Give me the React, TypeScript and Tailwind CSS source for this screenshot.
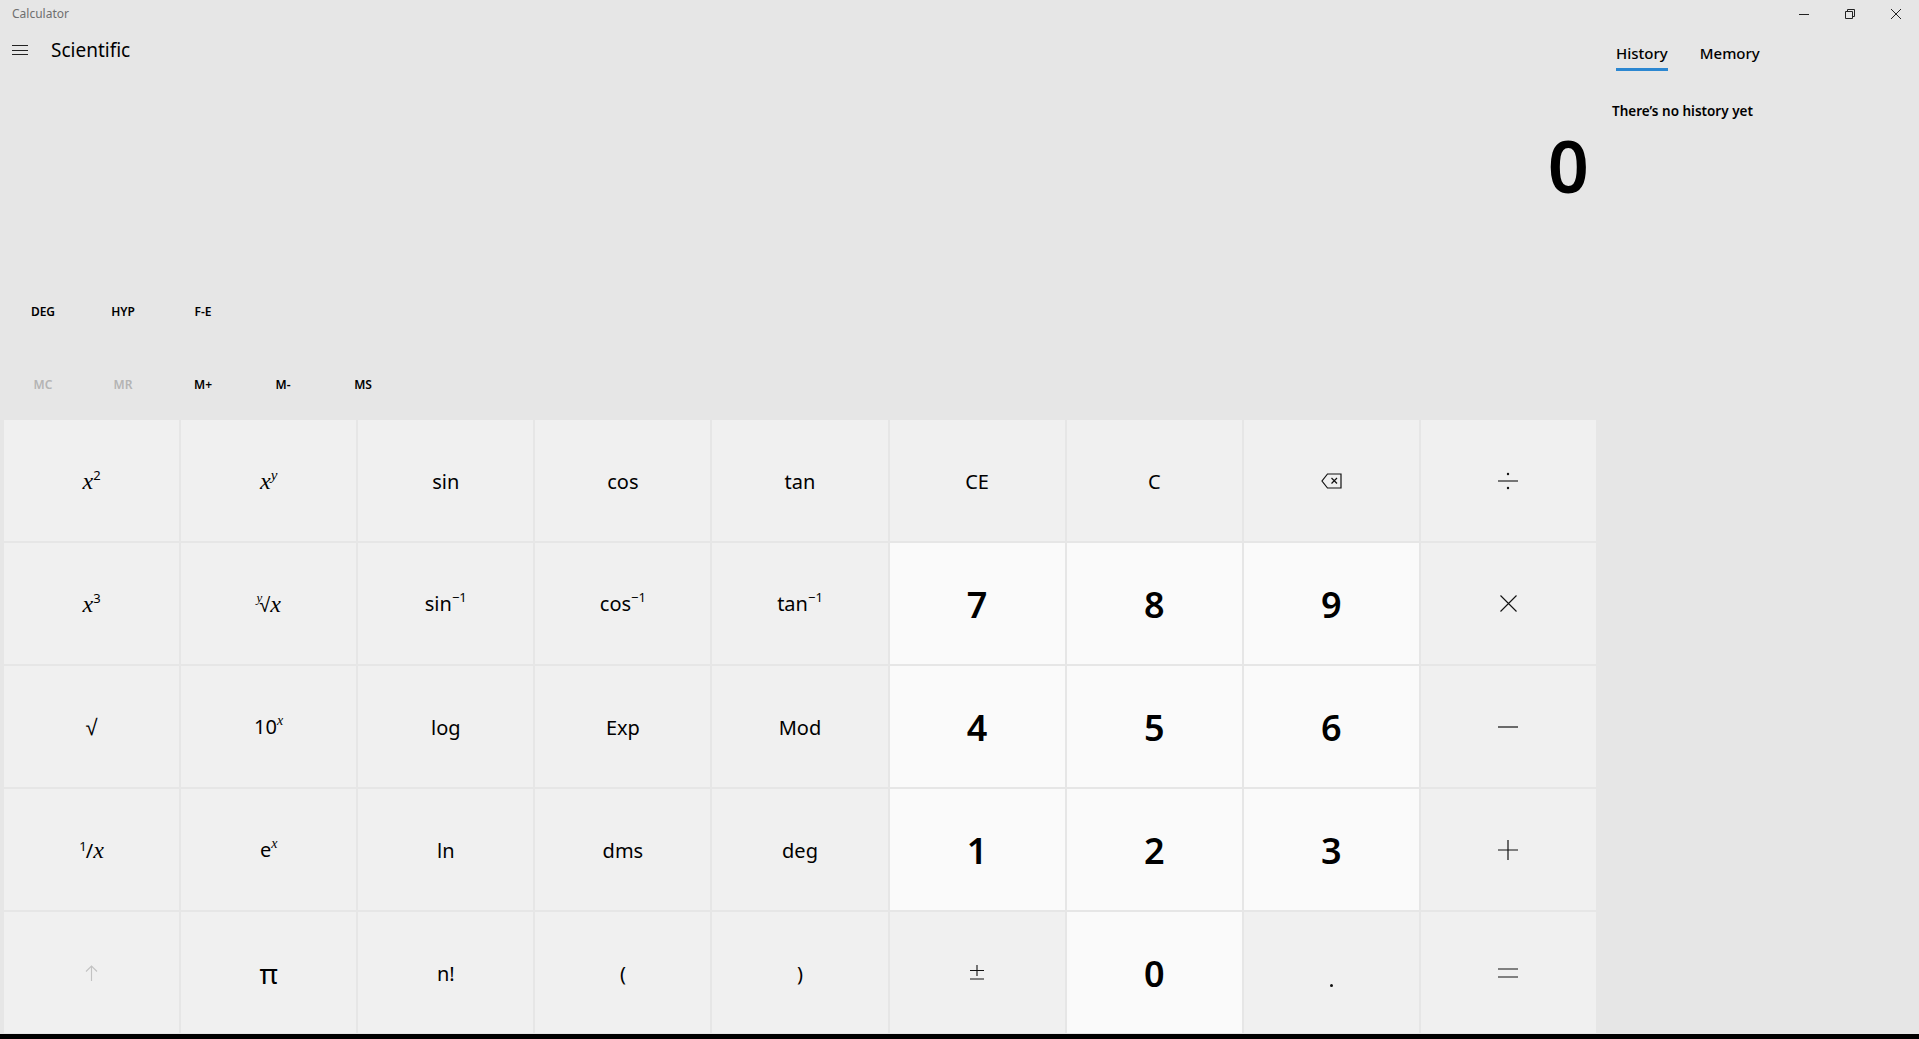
import React from "react";

const serif = "font-['Liberation_Serif',serif] italic";

function X({ size = "text-[24px]" }: { size?: string }) {
  return <span className={`${serif} ${size}`}>x</span>;
}

function Sup({ children, className = "" }: { children: React.ReactNode; className?: string }) {
  return <span className={`relative -top-[9px] text-[13px] leading-none ${className}`}>{children}</span>;
}

function Inv({ fn }: { fn: string }) {
  return (
    <span className="text-[20px]">
      {fn}
      <Sup className="-top-[8px] text-[12px]">−1</Sup>
    </span>
  );
}

// thin operator glyphs, drawn like the MDL2 calculator font
function Divide() {
  return (
    <svg width="20" height="20" viewBox="0 0 20 20">
      <line x1="0" y1="10" x2="20" y2="10" stroke="#111" strokeWidth="1.1" />
      <circle cx="10" cy="3" r="1.2" fill="#111" />
      <circle cx="10" cy="17" r="1.2" fill="#111" />
    </svg>
  );
}

function Times() {
  return (
    <svg width="17" height="17" viewBox="0 0 17 17">
      <path d="M0.5 0.5 L16.5 16.5 M16.5 0.5 L0.5 16.5" stroke="#111" strokeWidth="1.1" fill="none" />
    </svg>
  );
}

function Minus() {
  return (
    <svg width="20" height="2" viewBox="0 0 20 2">
      <line x1="0" y1="1" x2="20" y2="1" stroke="#111" strokeWidth="1.2" />
    </svg>
  );
}

function Plus() {
  return (
    <svg width="20" height="20" viewBox="0 0 20 20">
      <path d="M0 10 H20 M10 0 V20" stroke="#111" strokeWidth="1.2" fill="none" />
    </svg>
  );
}

function Equals() {
  return (
    <svg width="20" height="10" viewBox="0 0 20 10">
      <path d="M0 1 H20 M0 9 H20" stroke="#111" strokeWidth="1.2" fill="none" />
    </svg>
  );
}

function PlusMinus() {
  return (
    <svg width="14" height="15" viewBox="0 0 14 15">
      <path d="M0 5.5 H14 M7 0 V11 M0 14 H14" stroke="#111" strokeWidth="1.1" fill="none" />
    </svg>
  );
}

function Backspace() {
  return (
    <svg width="21" height="16" viewBox="0 0 21 16">
      <path d="M6.5 1 H20 V15 H6.5 L1 8 Z" stroke="#111" strokeWidth="1.2" fill="none" strokeLinejoin="miter" />
      <path d="M10.5 5 L16 10.5 M16 5 L10.5 10.5" stroke="#111" strokeWidth="1.2" fill="none" />
    </svg>
  );
}

function ShiftArrow() {
  return (
    <svg width="13" height="16" viewBox="0 0 13 16">
      <path d="M6.5 1 V16 M1 6.5 L6.5 1 L12 6.5" stroke="#c2c2c2" strokeWidth="1.1" fill="none" />
    </svg>
  );
}

type Key = { label: React.ReactNode; digit?: boolean };

const fn = (s: string) => <span className="relative top-[1px] text-[20px]">{s}</span>;
const digit = (s: string): Key => ({
  label: <span className="relative top-[1px] text-[36px] font-semibold">{s}</span>,
  digit: true,
});

const keys: Key[] = [
  { label: <span><X /><Sup>2</Sup></span> },
  { label: <span><X /><Sup className={`${serif} text-[15px]`}>y</Sup></span> },
  { label: fn("sin") },
  { label: fn("cos") },
  { label: fn("tan") },
  { label: fn("CE") },
  { label: fn("C") },
  { label: <Backspace /> },
  { label: <Divide /> },

  { label: <span><X /><Sup>3</Sup></span> },
  {
    label: (
      <span className="flex items-baseline">
        <span className={`${serif} relative -top-[10px] -mr-[3px] text-[13px] leading-none`}>y</span>
        <span className="text-[20px]">√</span>
        <X />
      </span>
    ),
  },
  { label: <Inv fn="sin" /> },
  { label: <Inv fn="cos" /> },
  { label: <Inv fn="tan" /> },
  digit("7"),
  digit("8"),
  digit("9"),
  { label: <Times /> },

  { label: <span className="text-[22px]">√</span> },
  { label: <span className="text-[20px]">10<Sup className={`${serif} text-[14px]`}>x</Sup></span> },
  { label: fn("log") },
  { label: fn("Exp") },
  { label: fn("Mod") },
  digit("4"),
  digit("5"),
  digit("6"),
  { label: <Minus /> },

  {
    label: (
      <span className="flex items-baseline">
        <span className="relative -top-[7px] text-[13px] leading-none">1</span>
        <span className="-ml-[1px] text-[20px]">/</span>
        <X />
      </span>
    ),
  },
  { label: <span className="text-[20px]">e<Sup className={`${serif} text-[14px]`}>x</Sup></span> },
  { label: fn("ln") },
  { label: fn("dms") },
  { label: fn("deg") },
  digit("1"),
  digit("2"),
  digit("3"),
  { label: <Plus /> },

  { label: <ShiftArrow /> },
  { label: <span className="text-[28px]">π</span> },
  { label: fn("n!") },
  { label: fn("(") },
  { label: fn(")") },
  { label: <PlusMinus /> },
  digit("0"),
  { label: <span className="mt-[26px] block h-[3px] w-[3px] rounded-full bg-[#111]" /> },
  { label: <Equals /> },
];

function WindowControls() {
  return (
    <div className="flex h-full">
      <button className="flex w-[46px] items-center justify-center">
        <svg width="10" height="10" viewBox="0 0 10 10">
          <line x1="0" y1="5.5" x2="10" y2="5.5" stroke="#222" strokeWidth="1" />
        </svg>
      </button>
      <button className="flex w-[46px] items-center justify-center">
        <svg width="10" height="10" viewBox="0 0 10 10">
          <path d="M0.5 2.5 H7.5 V9.5 H0.5 Z M2.5 2.5 V0.5 H9.5 V7.5 H7.5" stroke="#222" strokeWidth="1" fill="none" />
        </svg>
      </button>
      <button className="flex w-[46px] items-center justify-center">
        <svg width="10" height="10" viewBox="0 0 10 10">
          <path d="M0 0 L10 10 M10 0 L0 10" stroke="#222" strokeWidth="1" fill="none" />
        </svg>
      </button>
    </div>
  );
}

export default function App() {
  return (
    <div className="flex h-[1039px] w-[1919px] flex-col overflow-hidden bg-[#e6e6e6] font-['Noto_Sans',sans-serif] text-black">
      {/* title bar */}
      <div className="flex h-[28px] shrink-0 items-center justify-between">
        <span className="pl-[12px] text-[12px] text-[#6f6f6f]">Calculator</span>
        <WindowControls />
      </div>

      <div className="flex min-h-0 flex-1">
        {/* calculator */}
        <div className="flex w-[1597px] shrink-0 flex-col">
          <div className="flex h-[44px] items-center">
            <button className="ml-[12px] flex h-[16px] w-[16px] flex-col justify-center gap-[3.5px]">
              <span className="block h-[1px] w-[16px] bg-[#222]" />
              <span className="block h-[1px] w-[16px] bg-[#222]" />
              <span className="block h-[1px] w-[16px] bg-[#222]" />
            </button>
            <span className="ml-[23px] text-[19px] leading-none">Scientific</span>
          </div>

          <div className="h-[220px] pr-[8px] pt-[57px] text-right text-[72px] font-semibold leading-[72px]">0</div>

          <div className="flex h-[40px] pl-[3px] text-[12px] font-semibold">
            {["DEG", "HYP", "F-E"].map((t) => (
              <button key={t} className="flex w-[80px] items-center justify-center">
                {t}
              </button>
            ))}
          </div>

          <div className="mt-[33px] flex h-[40px] pl-[3px] text-[12px] font-semibold">
            {["MC", "MR", "M+", "M-", "MS"].map((t, i) => (
              <button
                key={t}
                className={`flex w-[80px] items-center justify-center ${i < 2 ? "text-[#b4b4b4]" : "text-black"}`}
              >
                {t}
              </button>
            ))}
          </div>

          <div className="ml-[4px] mr-[1px] mt-[15px] grid grid-cols-9 grid-rows-[repeat(5,121px)] gap-[2px]">
            {keys.map((k, i) => (
              <button
                key={i}
                className={`flex items-center justify-center ${k.digit ? "bg-[#fafafa]" : "bg-[#f0f0f0]"}`}
              >
                {k.label}
              </button>
            ))}
          </div>
        </div>

        {/* history / memory */}
        <div className="flex flex-1 flex-col pl-[19px] pt-[15px]">
          <div className="flex gap-[32px]">
            <div className="flex flex-col">
              <span className="h-[20px] text-[15px] font-medium leading-[20px]">History</span>
              <span className="mt-[5px] block h-[3px] w-full bg-[#2c87d1]" />
            </div>
            <span className="h-[20px] text-[15px] font-medium leading-[20px]">Memory</span>
          </div>
          <span className="-ml-[4px] mt-[30px] text-[13.5px] font-semibold leading-[20px]">There’s no history yet</span>
        </div>
      </div>

      <div className="mt-[1px] h-[5px] shrink-0 bg-black" />
    </div>
  );
}
